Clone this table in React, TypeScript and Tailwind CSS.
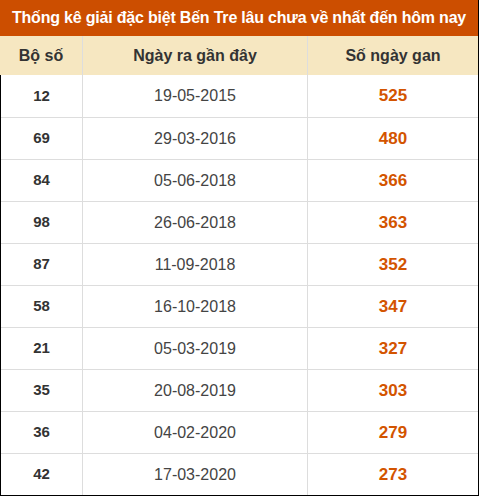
const rows: [string, string, number][] = [
  ["12", "19-05-2015", 525],
  ["69", "29-03-2016", 480],
  ["84", "05-06-2018", 366],
  ["98", "26-06-2018", 363],
  ["87", "11-09-2018", 352],
  ["58", "16-10-2018", 347],
  ["21", "05-03-2019", 327],
  ["35", "20-08-2019", 303],
  ["36", "04-02-2020", 279],
  ["42", "17-03-2020", 273],
];

export default function App() {
  return (
    <div className="w-[479px] h-[496px] bg-white font-['Liberation_Sans',Arial,sans-serif] border-r border-black">
      <div className="h-[36px] bg-[#cc4e00] text-white text-[16px] font-bold flex items-center justify-center whitespace-nowrap tracking-[-0.2px]">
        Thống kê giải đặc biệt Bến Tre lâu chưa về nhất đến hôm nay
      </div>
      <div className="grid grid-cols-[83px_225px_1fr] h-[39px] bg-[#f6e7c1] text-[#333] text-[16px] font-bold">
        <div className="flex items-center justify-center border-r border-[#ddd]">Bộ số</div>
        <div className="flex items-center justify-center border-r border-[#ddd]">Ngày ra gần đây</div>
        <div className="flex items-center justify-center">Số ngày gan</div>
      </div>
      <div className="border-l border-b border-black">
        {rows.map(([num, date, gan], i) => (
          <div
            key={num}
            className={`grid grid-cols-[82px_225px_1fr] h-[42px] ${i > 0 ? "border-t border-[#ddd]" : ""}`}
          >
            <div className="flex items-center justify-center border-r border-[#ddd] text-[15px] font-bold text-[#333]">
              {num}
            </div>
            <div className="flex items-center justify-center border-r border-[#ddd] text-[16px] text-[#444]">
              {date}
            </div>
            <div className="flex items-center justify-center text-[17px] font-bold text-[#d35400]">
              {gan}
            </div>
          </div>
        ))}
      </div>
    </div>
  );
}
